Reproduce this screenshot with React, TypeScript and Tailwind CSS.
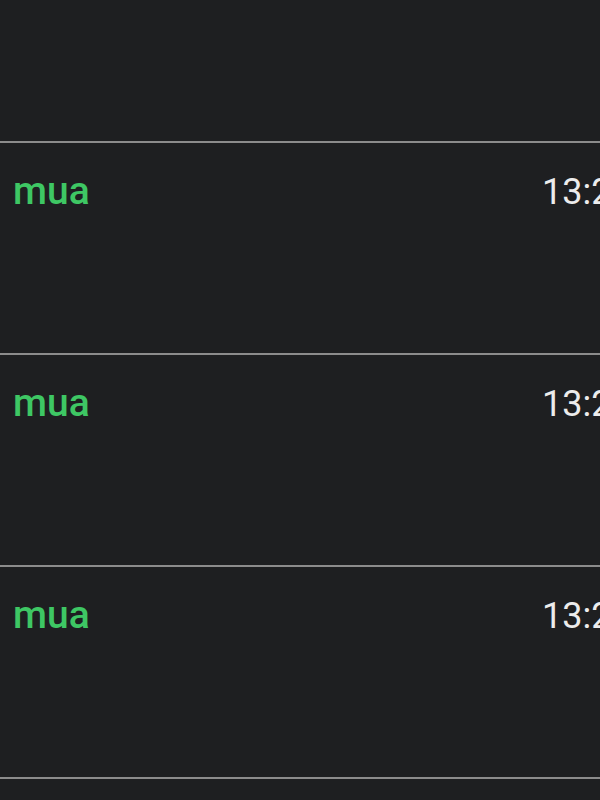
import React from "react";

type Msg = { name: string; time: string };

const msgs: Msg[] = [
    { name: "mua", time: "13:24" },
    { name: "mua", time: "13:24" },
    { name: "mua", time: "13:24" },
    { name: "mua", time: "13:24" },
];

const Row: React.FC<{ m: Msg }> = ({ m }) => {
    return (
        <div className="h-[212px] border-t-2 border-[#8c8c8c] pt-[29px] pl-[13px] flex items-baseline">
            <span className="flex-1 text-[39px] leading-none font-medium text-[#3ec764]">{m.name}</span>
            <span className="w-[58px] shrink-0 overflow-hidden whitespace-nowrap text-[36px] leading-none text-[#ececec]">{m.time}</span>
        </div>
    );
};

export default function App() {
    return (
        <div className="w-[600px] h-[800px] overflow-hidden bg-[#1e1f21]" style={{ fontFamily: "Roboto, 'Noto Sans', sans-serif" }}>
            <div className="h-[141px]"></div>
            {msgs.map((m, i) => (
                <Row key={i} m={m} />
            ))}
        </div>
    );
}
